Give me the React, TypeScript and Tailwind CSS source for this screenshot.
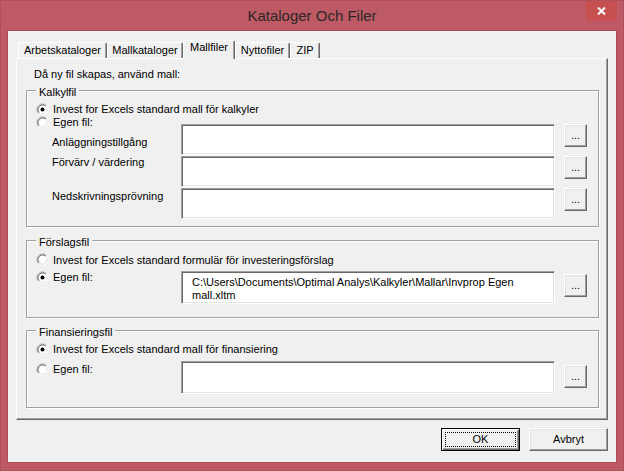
import React from "react";

function Radio({ checked }: { checked?: boolean }) {
  return (
    <svg width="13" height="13" viewBox="0 0 13 13" className="shrink-0">
      <circle cx="6.5" cy="6.5" r="5" fill="#fff" />
      <path d="M2.61 10.39A5.5 5.5 0 0 1 10.39 2.61" fill="none" stroke="#a0a0a0" />
      <path d="M10.39 2.61A5.5 5.5 0 0 1 2.61 10.39" fill="none" stroke="#fff" />
      <path d="M3.32 9.68A4.5 4.5 0 0 1 9.68 3.32" fill="none" stroke="#696969" />
      <path d="M9.68 3.32A4.5 4.5 0 0 1 3.32 9.68" fill="none" stroke="#e3e3e3" />
      {checked && <circle cx="6.5" cy="6.5" r="2" fill="#000" />}
    </svg>
  );
}

function RadioRow({ checked, label, clip }: { checked?: boolean; label: string; clip?: boolean }) {
  return (
    <div className="flex h-[13px] items-center gap-[4px]">
      <Radio checked={checked} />
      <span className={clip ? "h-[12px] overflow-hidden whitespace-nowrap" : "whitespace-nowrap"}>{label}</span>
    </div>
  );
}

function TextBox({ className = "", children }: { className?: string; children?: React.ReactNode }) {
  return (
    <div
      className={`w-[374px] shrink-0 border border-t-[#a0a0a0] border-l-[#a0a0a0] border-r-white border-b-white bg-white shadow-[inset_1px_1px_0_#696969,inset_-1px_-1px_0_#e3e3e3] ${className}`}
    >
      {children}
    </div>
  );
}

function DotsButton({ className = "" }: { className?: string }) {
  return (
    <button
      className={`flex h-[23px] w-[23px] shrink-0 items-center justify-center border border-t-white border-l-white border-r-[#696969] border-b-[#696969] bg-[#f0f0f0] shadow-[inset_-1px_-1px_0_#a0a0a0,inset_1px_1px_0_#e3e3e3] ${className}`}
    >
      ...
    </button>
  );
}

function GroupBox({ title, className = "", children }: { title: string; className?: string; children: React.ReactNode }) {
  return (
    <div
      className={`relative w-[573px] border border-[#a0a0a0] pl-[9px] shadow-[inset_1px_1px_0_#fff,1px_1px_0_#fff] ${className}`}
    >
      <span className="absolute left-[9px] top-[-5px] bg-[#f0f0f0] px-[3px]">{title}</span>
      {children}
    </div>
  );
}

function Tab({ label, className = "" }: { label: string; className?: string }) {
  return (
    <div
      className={`flex h-[16px] shrink-0 justify-center rounded-t-[2px] border-t border-l border-r border-t-white border-l-white border-r-[#696969] pt-[1px] shadow-[inset_-1px_0_0_#a0a0a0] ${className}`}
    >
      {label}
    </div>
  );
}

export default function App() {
  return (
    <div className="flex h-[471px] w-[624px] flex-col border border-[#b0505b] bg-[#bd5a65] font-['Liberation_Sans',Arial,sans-serif] text-[11px] leading-[13px] text-black">
      <div className="grid h-[29px] grid-cols-[1fr_auto_1fr]">
        <div />
        <div className="self-center text-[15px] leading-[18px] text-[#2e2626]">Kataloger Och Filer</div>
        <div className="flex items-start justify-end pr-[6px]">
          <div className="flex h-[20px] w-[31px] items-center justify-center bg-[#c75050]">
            <svg width="9" height="8" viewBox="0 0 9 8">
              <path d="M1 0.5L8 7.5M8 0.5L1 7.5" stroke="#fff" strokeWidth="2" />
            </svg>
          </div>
        </div>
      </div>

      <div className="mx-[6px] mb-[7px] flex flex-1 flex-col border border-[#a94a55] bg-[#f0f0f0]">
        <div className="mt-[9px] flex h-[18px] items-end pl-[10px]">
          <Tab label="Arbetskataloger" className="w-[89px]" />
          <Tab label="Mallkataloger" className="w-[76px]" />
          <div className="relative z-10 -mb-[1px] flex h-[19px] w-[52px] shrink-0 justify-center rounded-t-[2px] border-t border-l border-r border-t-white border-l-white border-r-[#696969] bg-[#f0f0f0] shadow-[inset_-1px_0_0_#a0a0a0]">
            Mallfiler
          </div>
          <Tab label="Nyttofiler" className="w-[55px]" />
          <Tab label="ZIP" className="w-[30px]" />
        </div>

        <div className="mx-[8px] border border-t-white border-l-white border-r-[#696969] border-b-[#696969] pb-[11px] pl-[9px] shadow-[inset_-1px_-1px_0_#a0a0a0]">
          <div className="ml-[8px] mt-[9px]">Då ny fil skapas, använd mall:</div>

          <GroupBox title="Kalkylfil" className="mt-[9px] pb-[7px] pt-[12px]">
            <RadioRow checked label="Invest for Excels standard mall för kalkyler" />
            <div className="flex">
              <div className="w-[145px] shrink-0">
                <RadioRow label="Egen fil:" />
                <div className="mt-[7px] pl-[16px]">Anläggningstillgång</div>
                <div className="mt-[7px] pl-[16px]">Förvärv / värdering</div>
                <div className="mt-[21px] pl-[16px]">Nedskrivningsprövning</div>
              </div>
              <div className="flex flex-col gap-[1px] pt-[8px]">
                {[0, 1, 2].map((i) => (
                  <div key={i} className="flex items-start gap-[9px]">
                    <TextBox className="h-[31px]" />
                    <DotsButton />
                  </div>
                ))}
              </div>
            </div>
          </GroupBox>

          <GroupBox title="Förslagsfil" className="mt-[13px] pb-[13px] pt-[12px]">
            <RadioRow clip label="Invest for Excels standard formulär för investeringsförslag" />
            <div className="mt-[5px] flex items-start">
              <div className="w-[145px] shrink-0">
                <RadioRow checked label="Egen fil:" />
              </div>
              <TextBox className="h-[33px] pl-[10px] pt-[4px]">
                C:\Users\Documents\Optimal Analys\Kalkyler\Mallar\Invprop Egen
                <br />
                mall.xltm
              </TextBox>
              <DotsButton className="ml-[9px] mt-[3px]" />
            </div>
          </GroupBox>

          <GroupBox title="Finansieringsfil" className="mt-[12px] pb-[13px] pt-[12px]">
            <RadioRow checked label="Invest for Excels standard mall för finansiering" />
            <div className="mt-[5px] flex items-start">
              <div className="w-[145px] shrink-0 pt-[2px]">
                <RadioRow label="Egen fil:" />
              </div>
              <TextBox className="h-[33px]" />
              <DotsButton className="ml-[9px] mt-[4px]" />
            </div>
          </GroupBox>
        </div>

        <div className="mt-[8px] flex justify-end gap-[9px] pr-[8px]">
          <button className="flex h-[23px] w-[79px] border border-black bg-[#f0f0f0] p-[3px] shadow-[inset_1px_1px_0_#fff,inset_-1px_-1px_0_#696969,inset_-2px_-2px_0_#a0a0a0]">
            <span className="flex flex-1 items-center justify-center border border-dotted border-black">OK</span>
          </button>
          <button className="flex h-[23px] w-[79px] items-center justify-center border border-t-white border-l-white border-r-[#696969] border-b-[#696969] bg-[#f0f0f0] shadow-[inset_-1px_-1px_0_#a0a0a0,inset_1px_1px_0_#e3e3e3]">
            Avbryt
          </button>
        </div>
      </div>
    </div>
  );
}
